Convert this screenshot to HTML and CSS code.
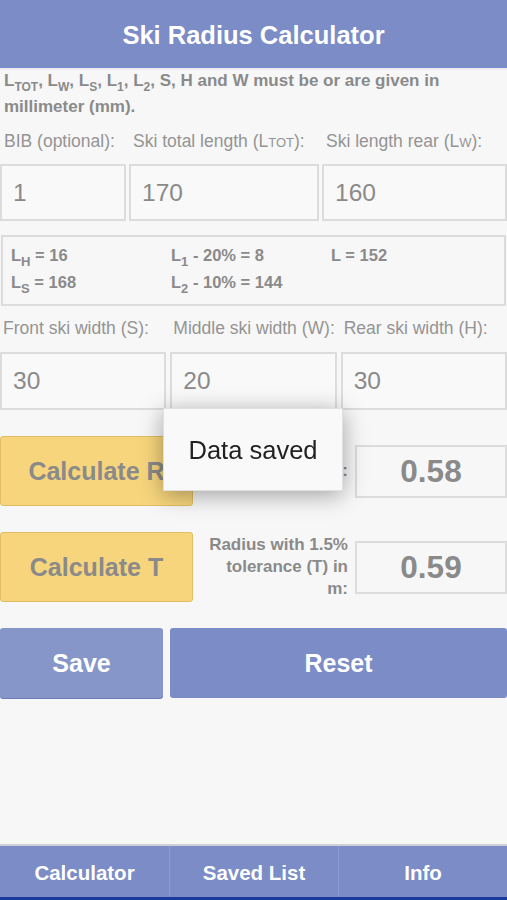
FILE: index.html
```html
<!DOCTYPE html>
<html lang="en">
<head>
  <meta charset="UTF-8"/><meta name="viewport" content="width=device-width, initial-scale=1.0"/>
  <title>Ski Radius Calculator</title>
  <link rel="stylesheet" href="styles.css">
</head>
<body>
  <header class="topbar">Ski Radius Calculator</header>
  <main>
    <p class="note">L<sub>TOT</sub>, L<sub>W</sub>, L<sub>S</sub>, L<sub>1</sub>, L<sub>2</sub>, S, H and W must be or are given in millimeter (mm).</p>

    <div class="row3 first labels1">
      <label>BIB (optional):</label>
      <label>Ski total length (L<small>TOT</small>):</label>
      <label>Ski length rear (L<small>W</small>):</label>
    </div>
    <div class="row3 first inputs">
      <input type="text" value="1"/>
      <input type="text" value="170"/>
      <input type="text" value="160"/>
    </div>

    <div class="results">
      <div class="col">
        <div>L<sub>H</sub> = 16</div>
        <div>L<sub>S</sub> = 168</div>
      </div>
      <div class="col">
        <div>L<sub>1</sub> - 20% = 8</div>
        <div>L<sub>2</sub> - 10% = 144</div>
      </div>
      <div class="col">
        <div>L = 152</div>
      </div>
    </div>

    <div class="row3 second labels2">
      <label>Front ski width (S):</label>
      <label>Middle ski width (W):</label>
      <label>Rear ski width (H):</label>
    </div>
    <div class="row3 second inputs">
      <input type="text" value="30"/>
      <input type="text" value="20"/>
      <input type="text" value="30"/>
    </div>

    <div class="calc-row">
      <button class="calc">Calculate R</button>
      <div class="out-label">Radius (R) in m:</div>
      <div class="out">0.58</div>
    </div>
    <div class="calc-row">
      <button class="calc">Calculate T</button>
      <div class="out-label">Radius with 1.5% tolerance (T) in m:</div>
      <div class="out">0.59</div>
    </div>

    <div class="actions">
      <button class="save">Save</button>
      <button class="reset">Reset</button>
    </div>
  </main>

  <nav class="tabs">
    <a href="#">Calculator</a>
    <a href="#">Saved List</a>
    <a href="#">Info</a>
  </nav>

  <div class="toast">Data saved</div>
</body>
</html>
```

FILE: styles.css
```css
*{box-sizing:border-box;}
body{margin:0;font-family:"Liberation Sans",Arial,sans-serif;background:#f7f7f7;color:#8a8a8a;height:900px;display:flex;flex-direction:column;overflow:hidden;}
.topbar{height:70px;flex:none;background:#7b8cc6;border-bottom:2px solid #ececf2;color:#fff;font-weight:bold;font-size:25.5px;display:flex;align-items:center;justify-content:center;padding-top:3px;}
main{flex:1;}
sub{font-size:12px;vertical-align:-5px;line-height:0;}
.note{margin:-2px 0 0;padding:0 4px;font-weight:bold;font-size:17px;line-height:26px;color:#8a8a8a;}
.row3{display:grid;gap:3px;}
.row3.first{grid-template-columns:126px 190px 1fr;}
.row3.second{grid-template-columns:1fr 1fr 1fr;gap:4px;}
label{display:block;height:20px;font-size:17.5px;line-height:20px;padding-left:4px;color:#949494;white-space:nowrap;}
label small{font-size:13px;}
.labels1{margin-top:11px;}
.labels2{margin-top:12px;}
.labels2 label{padding-left:3px;}
.first.inputs{margin-top:13px;}
.second.inputs{margin-top:14px;}
.inputs input{display:block;height:57px;width:100%;border:2px solid #dcdcdc;background:#f9f9f9;font-family:inherit;font-size:24.5px;color:#8a8a8a;padding:0 11px;outline:none;}
.second.inputs input{height:58px;}
.results{margin:14px 1px 0;height:71px;border:2px solid #dcdcdc;display:grid;grid-template-columns:160px 160px 1fr;padding:5px 8px 0;font-weight:bold;font-size:16.5px;line-height:27px;}
.results sub{font-size:13px;}
.calc-row{display:flex;align-items:center;margin-top:26px;height:70px;}
.calc{width:193px;height:70px;background:#f6d57c;border:1px solid #e2be62;border-radius:3px;font-family:inherit;font-weight:bold;font-size:25px;color:#8a8a8a;}
.out-label{width:155px;text-align:right;font-weight:bold;font-size:17px;line-height:22px;padding-left:12px;}
.out{flex:1;height:53px;margin-left:7px;border:2px solid #dcdcdc;display:flex;align-items:center;justify-content:center;font-weight:bold;font-size:31.5px;color:#8a8a8a;}
.actions{display:flex;gap:7px;margin-top:26px;}
.actions button{height:70px;border:none;border-radius:3px;color:#fff;font-family:inherit;font-weight:bold;font-size:25px;}
.save{width:163px;background:#8796c9;box-shadow:0 1px 0 #6c7cb8;}
.reset{flex:1;background:#7b8cc6;}
.tabs{height:56px;flex:none;border-top:2px solid #cfd0d6;border-bottom:3px solid #1b3a9c;background:#7b8cc6;display:grid;grid-template-columns:1fr 1fr 1fr;}
.tabs a{display:flex;align-items:center;justify-content:center;color:#fff;text-decoration:none;font-weight:bold;font-size:20.5px;border-left:1px solid #8c9bd0;padding-top:2px;}
.tabs a:first-child{border-left:none;}
.toast{position:fixed;left:163px;top:408px;width:180px;height:83px;background:#f9f9f9;border:1px solid #e0e0e0;box-shadow:0 4px 22px rgba(0,0,0,.35);display:flex;align-items:center;justify-content:center;font-size:25.5px;color:#222;padding-top:2px;}
```
